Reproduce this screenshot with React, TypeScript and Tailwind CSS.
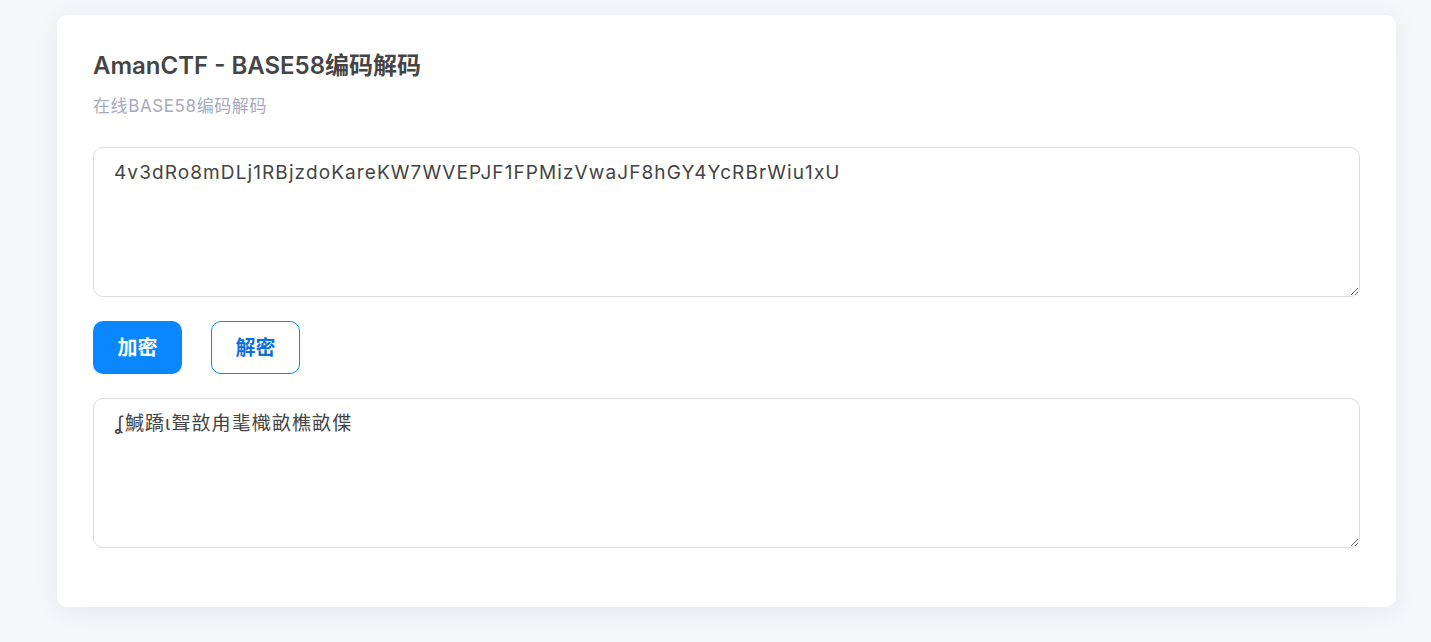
import { useState } from 'react';

const garbled = 'ʆ鰔蹻ɩ聟敨甪靟樴畝樵畝偞';

export default function App() {
  const [input, setInput] = useState('4v3dRo8mDLj1RBjzdoKareKW7WVEPJF1FPMizVwaJF8hGY4YcRBrWiu1xU');
  const [output, setOutput] = useState(garbled);

  return (
    <div
      className="min-h-[642px] w-full bg-[#f6f7f9] pt-[15px] pb-[35px]"
      style={{ fontFamily: 'Inter, "Noto Sans CJK SC", sans-serif' }}
    >
      <div className="ml-[57px] w-[1339px] rounded-[10px] bg-white px-9 pt-[35px] pb-[59px] shadow-[0_4px_24px_rgba(30,40,70,0.07)]">
        {/* Header */}
        <h1 className="text-[24px] leading-8 font-semibold text-[#454545]">AmanCTF - BASE58编码解码</h1>
        <p className="mt-3 text-[17px] leading-6 tracking-[0.6px] text-[#a8a8bf]">在线BASE58编码解码</p>

        {/* Input */}
        <textarea
          value={input}
          onChange={(e) => setInput(e.target.value)}
          className="mt-[29px] block h-[150px] w-full rounded-[10px] border border-[#dcdcdc] px-5 pt-3 pb-[10px] text-[19px] leading-[26px] tracking-[1.1px] text-[#444] outline-none"
        />

        {/* Actions */}
        <div className="mt-6 flex gap-[29px]">
          <button
            onClick={() => setOutput(input)}
            className="h-[53px] w-[89px] rounded-[10px] bg-[#0a87ff] text-[20px] font-bold text-white"
          >
            加密
          </button>
          <button
            onClick={() => setOutput(garbled)}
            className="h-[53px] w-[89px] rounded-[10px] border border-[#0a87ff] bg-white text-[20px] font-bold text-[#0a6fe0]"
          >
            解密
          </button>
        </div>

        {/* Output */}
        <textarea
          value={output}
          onChange={(e) => setOutput(e.target.value)}
          className="mt-6 block h-[150px] w-full rounded-[10px] border border-[#dcdcdc] px-5 pt-3 pb-[10px] text-[19px] leading-[26px] tracking-[1.1px] text-[#444] outline-none"
        />
      </div>
    </div>
  );
}
